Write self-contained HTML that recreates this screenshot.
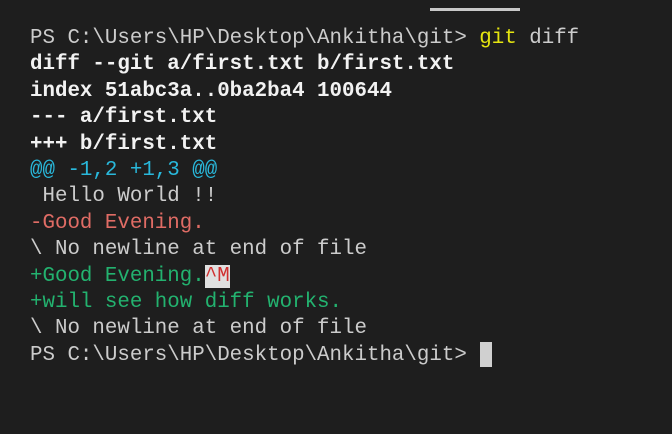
<!DOCTYPE html>
<html><head><style>
html,body{margin:0;padding:0;background:#1e1e1e;width:672px;height:434px;overflow:hidden}
.t{position:absolute;left:30px;top:26px;font-family:"Liberation Mono",monospace;font-size:20.8px;line-height:26.4px;color:#cccccc;white-space:pre}
.b{color:#f2f2f2;font-weight:bold}
.y{color:#e5e510}
.c{color:#29b8db}
.r{color:#e06c65}
.g{color:#23b26f}
.m{background:#e0e0e0;color:#d03030}
.cur{position:absolute;left:480px;top:342px;width:12px;height:25px;background:#d0d0d0}
.bar{position:absolute;left:430px;top:8px;width:90px;height:3px;background:#c8c8c8}
</style></head><body>
<div class="bar"></div>
<div class="t">PS C:\Users\HP\Desktop\Ankitha\git> <span class="y">git</span> diff
<span class="b">diff --git a/first.txt b/first.txt</span>
<span class="b">index 51abc3a..0ba2ba4 100644</span>
<span class="b">--- a/first.txt</span>
<span class="b">+++ b/first.txt</span>
<span class="c">@@ -1,2 +1,3 @@</span>
 Hello World !!
<span class="r">-Good Evening.</span>
\ No newline at end of file
<span class="g">+Good Evening.</span><span class="m">^M</span>
<span class="g">+will see how diff works.</span>
\ No newline at end of file
PS C:\Users\HP\Desktop\Ankitha\git> </div>
<div class="cur"></div>
</body></html>
